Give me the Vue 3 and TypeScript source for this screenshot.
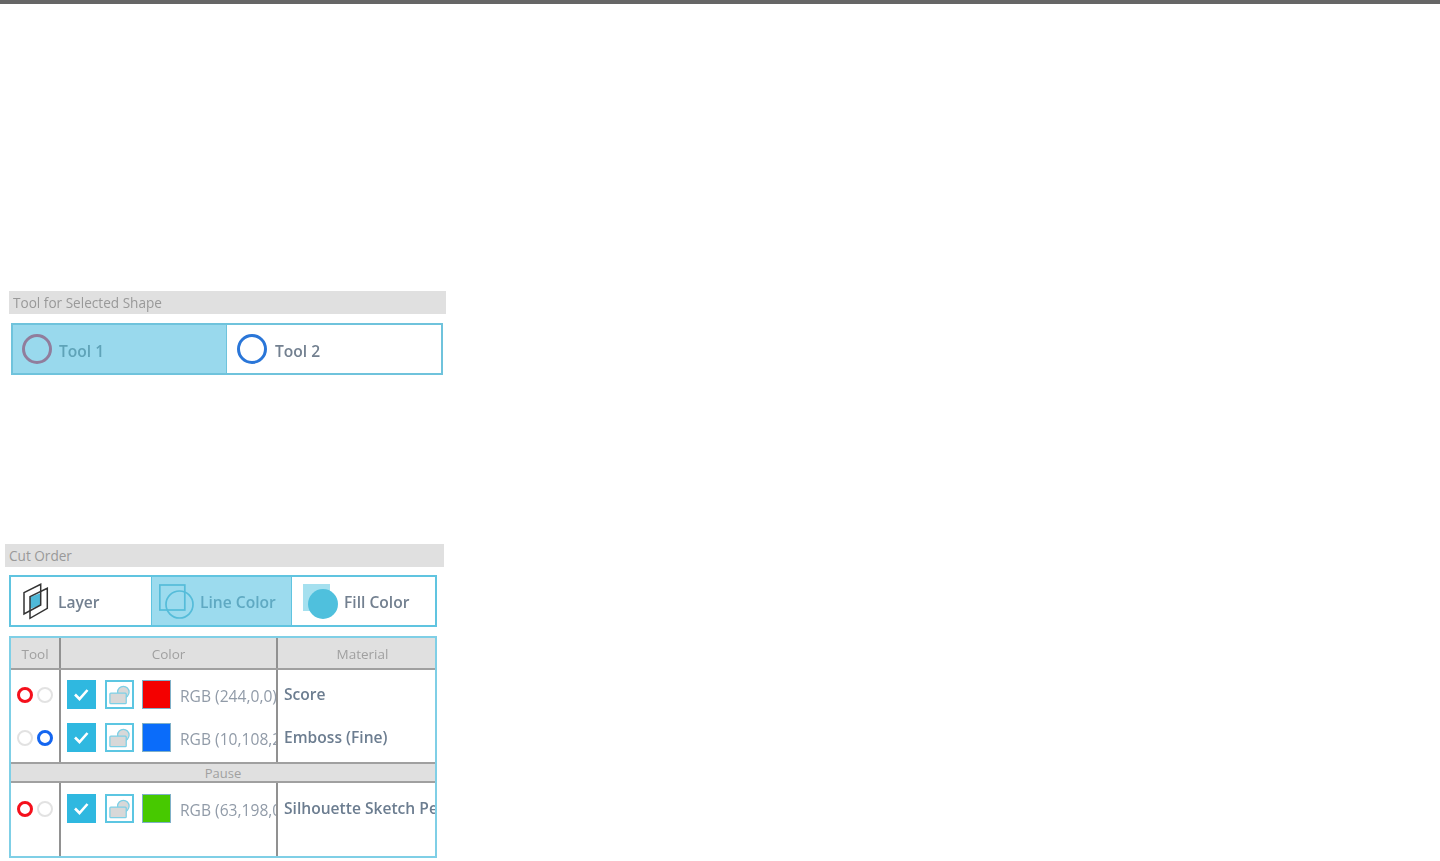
<script setup lang="ts">
interface CutRow {
  tool: 'red' | 'blue'
  swatch: string
  rgb: string
  material: string
}

const upperRows: CutRow[] = [
  { tool: 'red', swatch: '#f40000', rgb: 'RGB (244,0,0)', material: 'Score' },
  { tool: 'blue', swatch: '#0a6cfa', rgb: 'RGB (10,108,250)', material: 'Emboss (Fine)' }
]

const lowerRows: CutRow[] = [
  { tool: 'red', swatch: '#47c900', rgb: 'RGB (63,198,0)', material: 'Silhouette Sketch Pen' }
]
</script>

<template>
  <div class="page">
    <div class="topBar"></div>

    <section class="toolSection">
      <h2 class="sectionTitle">Tool for Selected Shape</h2>
      <div class="toolPicker">
        <div class="toolBtn toolBtn--active">
          <span class="toolRing toolRing--one"></span>
          <span>Tool 1</span>
        </div>
        <div class="toolBtn">
          <span class="toolRing toolRing--two"></span>
          <span>Tool 2</span>
        </div>
      </div>
    </section>

    <section class="cutSection">
      <h2 class="sectionTitle">Cut Order</h2>
      <div class="cutTabs">
        <div class="cutTab cutTab--layer">
          <svg class="cutIcon" viewBox="0 0 28 38" width="28" height="38">
            <path d="M8 15 L19 11 V23 L8 27 Z" fill="#4fb9d8" />
            <path d="M2 10.7 L18.7 2.3 V23 L2 32 Z" fill="none" stroke="#333" stroke-width="1.5" />
            <path d="M8 14.7 L25.3 6.3 V26.3 L8 36.3 Z" fill="none" stroke="#333" stroke-width="1.5" />
          </svg>
          <span>Layer</span>
        </div>
        <div class="cutTab cutTab--line">
          <svg class="cutIcon" viewBox="0 0 36 36" width="36" height="36">
            <rect x="0.8" y="2" width="25" height="25" fill="none" stroke="#55bcd9" stroke-width="1.7" />
            <circle cx="20.5" cy="21.5" r="13.5" fill="none" stroke="#55bcd9" stroke-width="1.7" />
          </svg>
          <span>Line Color</span>
        </div>
        <div class="cutTab cutTab--fill">
          <svg class="cutIcon" viewBox="0 0 38 38" width="38" height="38">
            <rect x="1" y="2" width="27" height="27" fill="#a5e0ef" />
            <circle cx="21" cy="22" r="15" fill="#4fc0dd" />
          </svg>
          <span>Fill Color</span>
        </div>
      </div>

      <div class="cutTable">
        <div class="tableRow tableHead">
          <div class="cell toolCell">Tool</div>
          <div class="cell colorCell">Color</div>
          <div class="cell materialCell">Material</div>
        </div>

        <div class="tableRow tableBody tableBody--upper">
          <div class="cell toolCell">
            <div v-for="row in upperRows" :key="row.rgb" class="dots">
              <span class="dot" :class="row.tool === 'red' ? 'dot--red' : 'dot--off'"></span>
              <span class="dot" :class="row.tool === 'blue' ? 'dot--blue' : 'dot--off'"></span>
            </div>
          </div>
          <div class="cell colorCell">
            <div v-for="row in upperRows" :key="row.rgb" class="colorLine">
              <span class="checkBox">
                <svg viewBox="0 0 28 28" width="28" height="28">
                  <path d="M8 14.5 L12.5 19 L20.5 10" fill="none" stroke="#fff" stroke-width="2.6" />
                </svg>
              </span>
              <span class="shapeBox">
                <svg viewBox="0 0 26 26" width="26" height="26">
                  <circle cx="17" cy="10" r="6" fill="#d8d8d8" stroke="#7dd0e6" stroke-width="1.3" />
                  <rect x="3" y="11" width="17" height="11" rx="1" fill="#d8d8d8" stroke="#7dd0e6" stroke-width="1.3" />
                </svg>
              </span>
              <span class="swatch" :style="{ background: row.swatch }"></span>
              <span class="rgbText">{{ row.rgb }}</span>
            </div>
          </div>
          <div class="cell materialCell">
            <div v-for="row in upperRows" :key="row.rgb" class="materialLine">{{ row.material }}</div>
          </div>
        </div>

        <div class="pauseRow">Pause</div>

        <div class="tableRow tableBody tableBody--lower">
          <div class="cell toolCell">
            <div v-for="row in lowerRows" :key="row.rgb" class="dots">
              <span class="dot" :class="row.tool === 'red' ? 'dot--red' : 'dot--off'"></span>
              <span class="dot" :class="row.tool === 'blue' ? 'dot--blue' : 'dot--off'"></span>
            </div>
          </div>
          <div class="cell colorCell">
            <div v-for="row in lowerRows" :key="row.rgb" class="colorLine">
              <span class="checkBox">
                <svg viewBox="0 0 28 28" width="28" height="28">
                  <path d="M8 14.5 L12.5 19 L20.5 10" fill="none" stroke="#fff" stroke-width="2.6" />
                </svg>
              </span>
              <span class="shapeBox">
                <svg viewBox="0 0 26 26" width="26" height="26">
                  <circle cx="17" cy="10" r="6" fill="#d8d8d8" stroke="#7dd0e6" stroke-width="1.3" />
                  <rect x="3" y="11" width="17" height="11" rx="1" fill="#d8d8d8" stroke="#7dd0e6" stroke-width="1.3" />
                </svg>
              </span>
              <span class="swatch" :style="{ background: row.swatch }"></span>
              <span class="rgbText">{{ row.rgb }}</span>
            </div>
          </div>
          <div class="cell materialCell">
            <div v-for="row in lowerRows" :key="row.rgb" class="materialLine">{{ row.material }}</div>
          </div>
        </div>
      </div>
    </section>
  </div>
</template>

<style scoped>
.page {
  height: 861px;
  overflow: hidden;
  background: #fff;
  font-family: "Open Sans", "Noto Sans", sans-serif;
  color: #738090;
}

.topBar {
  height: 4px;
  background: #666;
}

.toolSection {
  margin: 287px 0 0 9px;
  width: 437px;
  filter: blur(0.4px);
}

.sectionTitle {
  margin: 0;
  height: 23px;
  padding-left: 4px;
  background: #e0e0e0;
  color: #999;
  font-size: 13.6px;
  font-weight: 400;
  line-height: 24px;
}

.toolPicker {
  display: flex;
  width: 432px;
  height: 52px;
  box-sizing: border-box;
  margin: 9px 0 0 2px;
  border: 2px solid #6fc3dc;
}

.toolBtn {
  flex: 1;
  display: flex;
  align-items: center;
  gap: 7px;
  padding-left: 9px;
  box-sizing: border-box;
  font-size: 15.6px;
  font-weight: 600;
}

.toolBtn + .toolBtn {
  border-left: 1px solid #6fc3dc;
  padding-left: 10px;
  gap: 8px;
}

.toolBtn--active {
  flex: none;
  width: 213px;
  background: #99d9ed;
  color: #5fa3b8;
}

.toolRing {
  width: 30px;
  height: 30px;
  box-sizing: border-box;
  border-radius: 50%;
  border: 3px solid #2a76d8;
}

.toolRing--one {
  border-color: #917d9c;
}

.toolBtn span:last-child {
  margin-top: 3px;
}

.cutSection {
  margin: 169px 0 0 5px;
  width: 439px;
  filter: blur(0.4px);
}

.cutTabs {
  display: flex;
  width: 428px;
  height: 52px;
  box-sizing: border-box;
  margin: 8px 0 0 4px;
  border: 2px solid #60c4e0;
}

.cutTab {
  display: flex;
  align-items: center;
  font-size: 15.6px;
  font-weight: 600;
}

.cutTab--layer {
  width: 140px;
  gap: 8px;
  padding-left: 11px;
  box-sizing: border-box;
}

.cutTab--line {
  width: 141px;
  gap: 5px;
  padding-left: 7px;
  box-sizing: border-box;
  background: #9cdbee;
  color: #5fa9c2;
  border-left: 1px solid #60c4e0;
  border-right: 1px solid #60c4e0;
}

.cutTab--fill {
  flex: 1;
  gap: 4px;
  padding-left: 10px;
}

.cutIcon {
  flex: none;
}

.cutTab span {
  margin-top: 2px;
}

.cutTable {
  width: 428px;
  height: 222px;
  box-sizing: border-box;
  margin: 9px 0 0 4px;
  border: 2px solid #7fcfe6;
  display: flex;
  flex-direction: column;
}

.tableRow {
  display: grid;
  grid-template-columns: 48px 217px 1fr;
}

.cell {
  min-width: 0;
  overflow: hidden;
}

.cell + .cell {
  border-left: 2px solid #919191;
}

.tableHead {
  height: 32px;
  box-sizing: border-box;
  border-bottom: 2px solid #a0a0a0;
  background: #e0e0e0;
  color: #a0a0a0;
  font-size: 13.5px;
  line-height: 33px;
  text-align: center;
}

.tableHead .materialCell {
  padding-left: 12px;
}

.tableBody--upper {
  height: 92px;
}

.tableBody--lower {
  flex: 1;
}

.dots {
  height: 43px;
  display: flex;
  align-items: center;
  gap: 4px;
  padding-left: 6px;
}

.tableBody--upper .cell {
  padding-top: 3px;
}

.tableBody--lower .cell {
  padding-top: 4px;
}

.dot {
  width: 16px;
  height: 16px;
  box-sizing: border-box;
  border-radius: 50%;
  border: 2px solid #e2e2e2;
}

.dot--red {
  border: 3px solid #f5101c;
}

.dot--blue {
  border: 3px solid #1466f0;
}

.colorLine {
  height: 43px;
  display: flex;
  align-items: center;
  padding-left: 6px;
  white-space: nowrap;
}

.checkBox {
  flex: none;
  width: 29px;
  height: 29px;
  background: #2fb8e0;
}

.checkBox svg {
  display: block;
}

.shapeBox {
  flex: none;
  width: 29px;
  height: 29px;
  box-sizing: border-box;
  margin-left: 9px;
  border: 2px solid #5cc6e2;
  display: flex;
  align-items: center;
  justify-content: center;
}

.swatch {
  flex: none;
  width: 29px;
  height: 29px;
  box-sizing: border-box;
  margin-left: 8px;
  border: 1px solid #7fb0c8;
}

.rgbText {
  margin: 3px 0 0 9px;
  font-size: 15.6px;
  color: #919ba8;
}

.materialLine {
  height: 43px;
  line-height: 43px;
  padding-left: 6px;
  white-space: nowrap;
  font-size: 15.6px;
  font-weight: 600;
  color: #6c7d90;
}

.pauseRow {
  height: 21px;
  box-sizing: border-box;
  border-top: 2px solid #a0a0a0;
  border-bottom: 2px solid #a0a0a0;
  background: #e0e0e0;
  color: #a0a0a0;
  font-size: 13px;
  line-height: 18px;
  text-align: center;
}
</style>
